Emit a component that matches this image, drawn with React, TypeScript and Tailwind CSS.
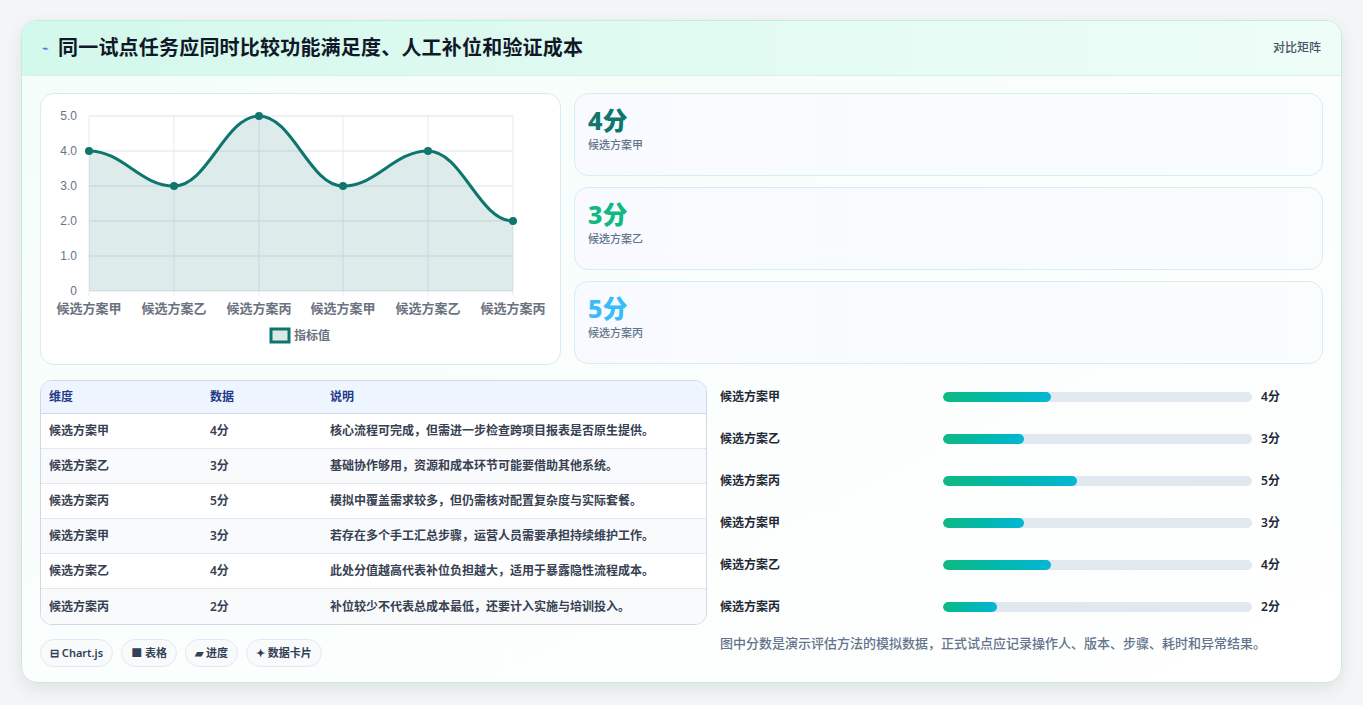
import React from "react";

const F = { fontFamily: '"Noto Sans","Noto Sans CJK SC",sans-serif' };
const xs = [88, 173, 258, 342, 427, 512];
const vals = [4, 3, 5, 3, 4, 2];
const y = (v: number) => 290 - v * 35;
const names = ["候选方案甲", "候选方案乙", "候选方案丙", "候选方案甲", "候选方案乙", "候选方案丙"];

function path() {
  const p = xs.map((x, i) => [x, y(vals[i])]);
  let d = `M${p[0][0]},${p[0][1]}`;
  for (let i = 0; i < p.length - 1; i++) {
    const [x0, y0] = p[i], [x1, y1] = p[i + 1];
    const dx = (x1 - x0) * 0.4;
    d += ` C${x0 + dx},${y0} ${x1 - dx},${y1} ${x1},${y1}`;
  }
  return d;
}

function Chart() {
  const d = path();
  return (
    <svg width="520" height="270" viewBox="40 93 520 270" className="block">
      {[0, 1, 2, 3, 4, 5].map((v) => (
        <g key={v}>
          <line x1={88} x2={512} y1={y(v)} y2={y(v)} stroke="#dde3ea" />
          <text x={76} y={y(v) + 4} fontSize="12" fill="#6b7280" textAnchor="end" fontFamily="Liberation Sans, sans-serif">{v === 0 ? "0" : v.toFixed(1)}</text>
        </g>
      ))}
      {xs.map((x, i) => (
        <g key={i}>
          <line x1={x} x2={x} y1={115} y2={295} stroke="#e5e9ef" />
          <text x={x} y={312} fontSize="13" fill="#6b7280" textAnchor="middle" fontWeight="600" style={F}>{names[i]}</text>
        </g>
      ))}
      <path d={`${d} L512,290 L88,290 Z`} fill="#0f766e" fillOpacity="0.14" />
      <path d={d} fill="none" stroke="#0f766e" strokeWidth="3" />
      {xs.map((x, i) => <circle key={i} cx={x} cy={y(vals[i])} r="4" fill="#0f766e" />)}
      <rect x={270} y={328} width={18} height={13} fill="#dbe9e7" stroke="#0f766e" strokeWidth="3" />
      <text x={293} y={339} fontSize="12" fill="#6b7280" fontWeight="600" style={F}>指标值</text>
    </svg>
  );
}

const stats = [
  ["4分", "text-[#0f766e]"],
  ["3分", "text-[#10b981]"],
  ["5分", "text-[#38bdf8]"],
];
const rows = [
  ["候选方案甲", "4分", "核心流程可完成，但需进一步检查跨项目报表是否原生提供。"],
  ["候选方案乙", "3分", "基础协作够用，资源和成本环节可能要借助其他系统。"],
  ["候选方案丙", "5分", "模拟中覆盖需求较多，但仍需核对配置复杂度与实际套餐。"],
  ["候选方案甲", "3分", "若存在多个手工汇总步骤，运营人员需要承担持续维护工作。"],
  ["候选方案乙", "4分", "此处分值越高代表补位负担越大，适用于暴露隐性流程成本。"],
  ["候选方案丙", "2分", "补位较少不代表总成本最低，还要计入实施与培训投入。"],
];
const bars = [["候选方案甲", 4, 35], ["候选方案乙", 3, 26.2], ["候选方案丙", 5, 43.4], ["候选方案甲", 3, 26.2], ["候选方案乙", 4, 35], ["候选方案丙", 2, 17.5]] as const;

export default function App() {
  return (
    <div style={F} className="w-[1363px] h-[705px] bg-[#f4f5f7] pt-[20px] pl-[21px] overflow-hidden">
      <div className="w-[1321px] h-[663px] rounded-[16px] border border-[#bfeee0] bg-gradient-to-br from-[#f4fdfa] to-white shadow-[0_6px_18px_rgba(0,0,0,0.08)] overflow-hidden">
        <div className="h-[55px] flex items-center justify-between px-[20px] bg-gradient-to-r from-[#d3f8ec] to-[#eefdf8] border-b border-[#d6f0ea]">
          <div className="flex items-center gap-[9px]">
            <span className="text-[11px] text-[#2563eb]">⌁</span>
            <span className="text-[20px] font-bold text-[#111827] tracking-[0.2px]">同一试点任务应同时比较功能满足度、人工补位和验证成本</span>
          </div>
          <span className="text-[12px] text-[#475569] font-medium">对比矩阵</span>
        </div>
        <div className="px-[18px] pt-[17px]">
          <div className="flex gap-[13px]">
            <div className="w-[521px] h-[272px] rounded-[14px] border border-[#dbeaf0] bg-white overflow-hidden">
              <Chart />
            </div>
            <div className="flex-1 flex flex-col gap-[11px]">
              {stats.map(([v, c], i) => (
                <div key={i} className="h-[83px] rounded-[14px] border border-[#d5eef0] bg-gradient-to-r from-[#f8faff] to-[#f9fdfd] px-[13px] pt-[9px]">
                  <div className={`text-[25px] font-extrabold leading-[34px] ${c}`}>{v}</div>
                  <div className="text-[11px] text-[#64748b] font-medium">候选方案{["甲", "乙", "丙"][i]}</div>
                </div>
              ))}
            </div>
          </div>
          <div className="flex gap-[13px] mt-[15px]">
            <div className="w-[667px]">
              <div className="rounded-[12px] border border-[#cfd8e6] overflow-hidden bg-white text-[12px] font-semibold">
                <div className="flex h-[33px] items-center bg-[#eef5ff] text-[#1e3a8a] border-b border-[#cfd8e6]">
                  <div className="w-[169px] pl-[8px]">维度</div>
                  <div className="w-[120px]">数据</div>
                  <div>说明</div>
                </div>
                {rows.map((r, i) => (
                  <div key={i} className={`flex h-[35px] items-center text-[#374151] ${i < 5 ? "border-b border-[#e3e8ef]" : ""} ${i % 2 ? "bg-[#f8fafc]" : "bg-white"}`}>
                    <div className="w-[169px] pl-[8px]">{r[0]}</div>
                    <div className="w-[120px]">{r[1]}</div>
                    <div>{r[2]}</div>
                  </div>
                ))}
              </div>
              <div className="flex gap-[8px] mt-[14px] text-[11px] font-semibold text-[#334155]">
                {["⊟ Chart.js", "■ 表格", "▰ 进度", "✦ 数据卡片"].map((t) => (
                  <span key={t} className="h-[28px] px-[9px] flex items-center rounded-full border border-[#e2e8f0] bg-[#f8fafc]">{t}</span>
                ))}
              </div>
            </div>
            <div className="flex-1 -mt-[4px]">
              {bars.map(([n, s, w], i) => (
                <div key={i} className="h-[42px] flex items-center text-[12px] font-semibold text-[#1f2937]">
                  <div className="w-[223px]">{n}</div>
                  <div className="w-[309px] h-[10px] rounded-full bg-[#e2e8f0] overflow-hidden">
                    <div className="h-full rounded-full bg-gradient-to-r from-[#10b981] to-[#06b6d4]" style={{ width: `${w}%` }} />
                  </div>
                  <div className="ml-[9px]">{s}分</div>
                </div>
              ))}
              <div className="text-[13px] text-[#64748b] font-medium mt-[6px]">图中分数是演示评估方法的模拟数据，正式试点应记录操作人、版本、步骤、耗时和异常结果。</div>
            </div>
          </div>
        </div>
      </div>
    </div>
  );
}
